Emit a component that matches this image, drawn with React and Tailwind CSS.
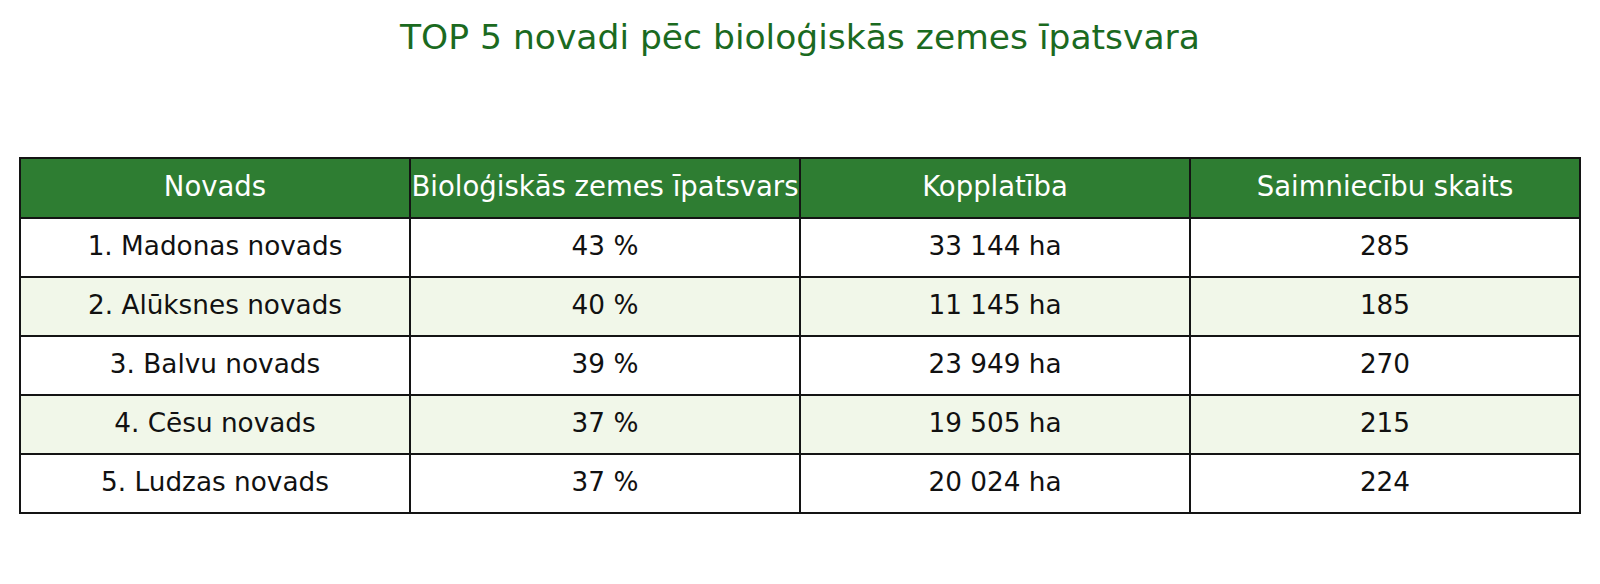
import React from "react";

const rows = [
  ["1. Madonas novads", "43 %", "33 144 ha", "285"],
  ["2. Alūksnes novads", "40 %", "11 145 ha", "185"],
  ["3. Balvu novads", "39 %", "23 949 ha", "270"],
  ["4. Cēsu novads", "37 %", "19 505 ha", "215"],
  ["5. Ludzas novads", "37 %", "20 024 ha", "224"],
];

const headers = ["Novads", "Bioloģiskās zemes īpatsvars", "Kopplatība", "Saimniecību skaits"];

export default function App() {
  return (
    <div
      className="w-[1600px] h-[584px] bg-white overflow-hidden"
      style={{ fontFamily: "'DejaVu Sans', 'Noto Sans', sans-serif" }}
    >
      <h1 className="pt-[15px] text-center text-[34.5px] leading-[44px] text-[#1b6a1f]">
        TOP 5 novadi pēc bioloģiskās zemes īpatsvara
      </h1>
      <div className="mt-[98px] pl-[19px]">
        <table className="w-[1562px] table-fixed border-collapse">
          <thead>
            <tr className="bg-[#2e7d32]">
              {headers.map((h) => (
                <th
                  key={h}
                  className="h-[60px] border-2 border-[#141414] p-0 pb-[2px] text-center align-middle text-[27.5px] font-normal text-white whitespace-nowrap"
                >
                  {h}
                </th>
              ))}
            </tr>
          </thead>
          <tbody>
            {rows.map((r, i) => (
              <tr key={i} className={i % 2 === 1 ? "bg-[#f1f7e9]" : "bg-white"}>
                {r.map((c, j) => (
                  <td
                    key={j}
                    className="h-[59px] border-2 border-[#141414] p-0 pb-[2px] text-center align-middle text-[26.3px] text-[#111]"
                  >
                    {c}
                  </td>
                ))}
              </tr>
            ))}
          </tbody>
        </table>
      </div>
    </div>
  );
}
